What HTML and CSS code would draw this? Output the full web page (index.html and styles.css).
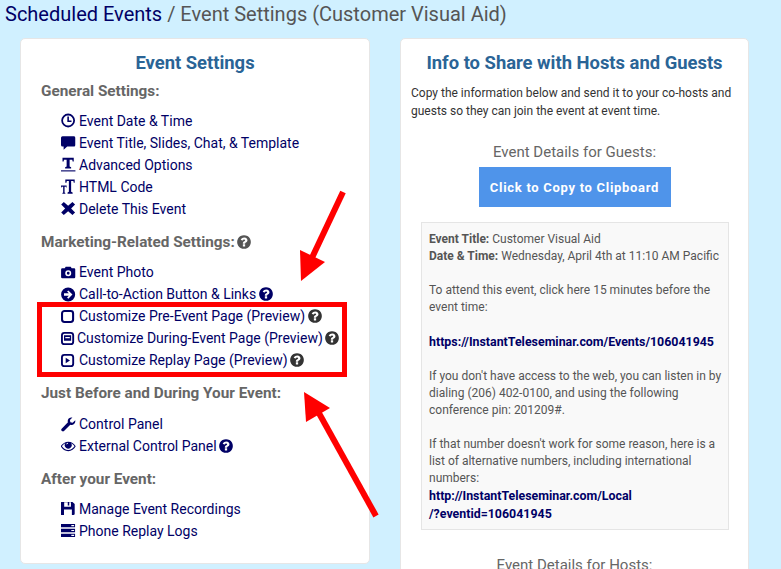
FILE: index.html
```html
<!DOCTYPE html>
<html lang="en">
<head>
<meta charset="utf-8">
<title>Event Settings</title>
<link rel="stylesheet" href="styles.css">
</head>
<body>
<svg class="sprite" aria-hidden="true">
  <symbol id="i-help" viewBox="0 0 1792 1792"><path d="M1024 1376v-192q0-14-9-23t-23-9h-192q-14 0-23 9t-9 23v192q0 14 9 23t23 9h192q14 0 23-9t9-23zm256-672q0-88-55.5-163t-138.5-116-170-41q-243 0-371 213-15 24 8 42l132 100q7 6 19 6 16 0 25-12 53-68 86-92 34-24 86-24 48 0 85.5 26t37.5 59q0 38-20 61t-68 45q-63 28-115.5 86.5t-52.5 125.5v36q0 14 9 23t23 9h192q14 0 23-9t9-23q0-19 21.5-49.5t54.5-49.5q32-18 49-28.5t46-35 44.5-48 28-60.5 12.5-81zm384 192q0 209-103 385.5t-279.5 279.5-385.5 103-385.5-103-279.5-279.5-103-385.5 103-385.5 279.5-279.5 385.5-103 385.5 103 279.5 279.5 103 385.5z"/></symbol>
  <symbol id="i-clock" viewBox="0 0 16 16"><circle cx="7.6" cy="8" r="6.4" fill="none" stroke="currentColor" stroke-width="1.9"/><path d="M7.6 3.8V8.8H11.2" fill="none" stroke="currentColor" stroke-width="1.7"/></symbol>
  <symbol id="i-comment" viewBox="0 0 16 16"><path d="M1.6 1.2H14Q15.2 1.2 15.2 2.8V10.6Q15.2 12.2 14 12.2H6.6L2.8 15.6V12.2H1.6Q0 12.2 0 10.6V2.8Q0 1.2 1.6 1.2Z"/></symbol>
  <symbol id="i-textw" viewBox="0 0 16 16"><path d="M1.6 .8H13.6V4.8H12.4L12 2.8H9.2V10.2L10.8 11V12.2H4.4V11L6 10.2V2.8H3.2L2.8 4.8H1.6Z"/><path d="M0 14.2H15.4V15.4H0Z"/></symbol>
  <symbol id="i-texth" viewBox="0 0 16 16"><path d="M4.6 .4H14.6V4H13.6L13.2 2.2H10.8V13.6L12.4 14.4V15.6H7V14.4L8.4 13.6V2.2H6.2L5.8 4H4.6Z"/><path d="M0 7H6V9H5.4V8.2H3.8V14.5L4.6 15V15.6H1.5V15L2.3 14.5V8.2H.6V9H0Z"/></symbol>
  <symbol id="i-times" viewBox="0 0 16 16"><path d="M3 1 7.6 5 12.2 1 15 3.8 10.8 8 15 12.2 12.2 15 7.6 11 3 15 .2 12.2 4.4 8 .2 3.8Z"/></symbol>
  <symbol id="i-camera" viewBox="0 0 16 16"><path fill-rule="evenodd" d="M5 1.8H10.4L11.4 3.5H14Q15.2 3.5 15.2 4.8V12.9Q15.2 14.2 14 14.2H1.4Q.1 14.2.1 12.9V4.8Q.1 3.5 1.4 3.5H4ZM7.7 5.6A3.2 3.2 0 1 0 7.7 12 3.2 3.2 0 0 0 7.7 5.6ZM7.7 7.3A1.5 1.5 0 1 1 7.7 10.3 1.5 1.5 0 0 1 7.7 7.3Z"/></symbol>
  <symbol id="i-arrow" viewBox="0 0 16 16"><path fill-rule="evenodd" d="M7.6 .5A7.5 7.5 0 1 1 7.6 15.5 7.5 7.5 0 0 1 7.6 .5ZM7.8 3.6 6.5 4.9 8.4 6.7H3.2V9.3H8.4L6.5 11.1 7.8 12.4 12.2 8Z"/></symbol>
  <symbol id="i-box" viewBox="0 0 16 16"><rect x="1.1" y="2.1" width="11.8" height="11.8" rx="2.6" fill="none" stroke="currentColor" stroke-width="2.2"/></symbol>
  <symbol id="i-boxm" viewBox="0 0 16 16"><rect x="1" y="2" width="12" height="12" rx="2.6" fill="none" stroke="currentColor" stroke-width="2"/><path fill-rule="evenodd" d="M3.2 4.4H10.8V10.4H3.2ZM4.6 6.4V7.6H9.4V6.4Z"/></symbol>
  <symbol id="i-boxp" viewBox="0 0 16 16"><rect x="1" y="2" width="12" height="12" rx="2.6" fill="none" stroke="currentColor" stroke-width="2"/><path d="M5 5 9.6 8 5 11Z"/></symbol>
  <symbol id="i-wrench" viewBox="0 0 16 16"><path d="M15.2 3.5Q15.6 6 13.9 7.5 12.1 9 9.9 8.2L3.2 15Q2.2 16 1 15-.4 13.8.7 12.6L7.4 5.7Q6.6 3.4 8.2 1.7 9.9.1 12.2.5L9.5 3.2 10 5.6 12.4 6.2Z"/></symbol>
  <symbol id="i-eye" viewBox="0 0 16 16"><path fill-rule="evenodd" d="M7.7 2.8C11.1 2.8 14 4.8 15.7 7.8 14 10.9 11.1 13 7.7 13S1.4 10.9-.3 7.8C1.4 4.8 4.3 2.8 7.7 2.8ZM4.7 4.5C3.2 5.1 2 6.3 1 7.8 2.7 10.3 5 11.8 7.7 11.8S12.7 10.3 14.4 7.8C13.4 6.3 12.2 5.1 10.7 4.5A3.7 3.7 0 1 1 4.7 4.5ZM7.5 4.1Q5.7 4.2 5.5 6.1 6.3 5 7.5 5Z"/></symbol>
  <symbol id="i-save" viewBox="0 0 16 16"><path fill-rule="evenodd" d="M.4 1H12.2L14.6 3.2V13.6Q14.6 15 13.2 15H.4Q0 15 0 14.6V1.4Q0 1 .4 1ZM3.4 1.4V6.2H10.6V1.4H8.8V4.8H7.2V1.4ZM3.2 9V15H11.6V9Z"/></symbol>
  <symbol id="i-server" viewBox="0 0 16 16"><path fill-rule="evenodd" d="M0 1H15V4.6H0ZM0 6.2H15V9.8H0ZM0 11.4H15V15H0ZM11 2.2V3.4H14V2.2ZM11 7.4V8.6H14V7.4ZM11 12.6V13.8H14V12.6Z"/></symbol>
</svg>

<header class="crumb"><a class="crumb-link">Scheduled Events</a> / Event Settings (Customer Visual Aid)</header>

<main class="columns">
  <section class="card">
    <h2 class="card-title">Event Settings</h2>

    <h3 class="group-head group-first">General Settings:</h3>
    <ul class="links">
      <li class="link"><svg class="ico ico-up"><use href="#i-clock"/></svg>Event Date &amp; Time</li>
      <li class="link"><svg class="ico ico-up"><use href="#i-comment"/></svg>Event Title, Slides, Chat, &amp; Template</li>
      <li class="link"><svg class="ico ico-up"><use href="#i-textw"/></svg>Advanced Options</li>
      <li class="link"><svg class="ico ico-up"><use href="#i-texth"/></svg>HTML Code</li>
      <li class="link"><svg class="ico ico-up"><use href="#i-times"/></svg>Delete This Event</li>
    </ul>

    <h3 class="group-head">Marketing-Related Settings: <svg class="help help-head"><use href="#i-help"/></svg></h3>
    <ul class="links">
      <li class="link"><svg class="ico"><use href="#i-camera"/></svg>Event Photo</li>
      <li class="link"><svg class="ico"><use href="#i-arrow"/></svg>Call-to-Action Button &amp; Links <svg class="help help-navy"><use href="#i-help"/></svg></li>
      <li class="link"><svg class="ico"><use href="#i-box"/></svg>Customize Pre-Event Page (Preview) <svg class="help help-dark"><use href="#i-help"/></svg></li>
      <li class="link link-tight"><svg class="ico"><use href="#i-boxm"/></svg>Customize During-Event Page (Preview) <svg class="help help-dark"><use href="#i-help"/></svg></li>
      <li class="link"><svg class="ico"><use href="#i-boxp"/></svg>Customize Replay Page (Preview) <svg class="help help-dark"><use href="#i-help"/></svg></li>
    </ul>

    <h3 class="group-head group-wide">Just Before and During Your Event:</h3>
    <ul class="links">
      <li class="link"><svg class="ico"><use href="#i-wrench"/></svg>Control Panel</li>
      <li class="link"><svg class="ico"><use href="#i-eye"/></svg>External Control Panel <svg class="help help-navy"><use href="#i-help"/></svg></li>
    </ul>

    <h3 class="group-head">After your Event:</h3>
    <ul class="links">
      <li class="link"><svg class="ico ico-up"><use href="#i-save"/></svg>Manage Event Recordings</li>
      <li class="link"><svg class="ico ico-up"><use href="#i-server"/></svg>Phone Replay Logs</li>
    </ul>
  </section>

  <section class="card card-info">
    <h2 class="card-title">Info to Share with Hosts and Guests</h2>
    <p class="intro">Copy the information below and send it to your co-hosts and guests so they can join the event at event time.</p>
    <h4 class="detail-head">Event Details for Guests:</h4>
    <div class="btn-row"><button class="copy-btn" type="button">Click to Copy to Clipboard</button></div>
    <div class="details">
      <p class="para"><b>Event Title:</b> Customer Visual Aid<br><b>Date &amp; Time:</b> Wednesday, April 4th at 11:10 AM Pacific</p>
      <p class="para">To attend this event, click here 15 minutes before the event time:</p>
      <p class="para"><a class="url">https://InstantTeleseminar.com/Events/106041945</a></p>
      <p class="para">If you don't have access to the web, you can listen in by dialing (206) 402-0100, and using the following conference pin: 201209#.</p>
      <p class="para">If that number doesn't work for some reason, here is a list of alternative numbers, including international numbers:<br><a class="url">http://InstantTeleseminar.com/Local<br>/?eventid=106041945</a></p>
    </div>
    <h4 class="detail-head detail-hosts">Event Details for Hosts:</h4>
  </section>
</main>

<div class="highlight-box"></div>
<svg class="annotations" viewBox="0 0 781 569" aria-hidden="true">
  <path class="arrow-line" d="M343 192 310 262"/>
  <path class="arrow-head" d="M300 250 325 262 301 281Z"/>
  <path class="arrow-line" d="M376 516 315 406"/>
  <path class="arrow-head" d="M304 392 330 408 306 422Z"/>
</svg>
</body>
</html>
```

FILE: styles.css
```css
* { box-sizing: border-box; }
html, body { margin: 0; height: 100%; overflow: hidden; }
body {
  position: relative;
  background: #d0f0ff;
  font-family: Roboto, "Liberation Sans", sans-serif;
  color: #555;
}
.sprite { display: none; }

.crumb {
  padding: 3px 0 0 5px;
  height: 38px;
  font-size: 20px;
  line-height: 23px;
  color: #555;
}
.crumb-link { color: #000066; }

.columns {
  display: grid;
  grid-template-columns: 350px 349px;
  column-gap: 30px;
  padding-left: 20px;
  align-items: start;
}
.card {
  background: #fff;
  border: 1px solid #e6e6e6;
  border-radius: 5px;
  height: 526px;
  padding: 11px 20px 0;
}
.card-info { height: 560px; padding: 11px 10px 0; }
.card-title {
  margin: 0;
  text-align: center;
  font-size: 18.4px;
  line-height: 26px;
  font-weight: 700;
  color: #2a6496;
}
.group-head {
  margin: 11px 0 8px;
  font-size: 15.3px;
  line-height: 22px;
  font-weight: 700;
  color: #666;
}
.group-first { margin-top: 4px; }
.group-wide { margin-bottom: 9px; }
.links { list-style: none; margin: 0; padding: 0 0 0 20px; }
.link {
  display: flex;
  align-items: center;
  height: 22px;
  font-size: 14px;
  color: #000066;
  white-space: pre;
}
.ico {
  width: 15px;
  height: 15px;
  margin-right: 3px;
  fill: currentColor;
  flex: none;
}
.ico-up { margin-bottom: 2px; }
.link-tight .ico { margin-right: 1px; }
.help {
  width: 16px;
  height: 16px;
  margin-left: -2px;
  fill: #555;
  vertical-align: -3px;
  flex: none;
}
.help-head { margin-left: -3px; }
.help-navy { fill: #000066; }
.help-dark { fill: #333; }

.intro {
  margin: 8px 0 0;
  font-size: 12px;
  line-height: 18px;
  color: #333;
}
.detail-head {
  margin: 21px 0 0;
  text-align: center;
  font-size: 15px;
  line-height: 22px;
  font-weight: 400;
  color: #666;
}
.btn-row { display: flex; justify-content: center; margin-top: 4px; }
.copy-btn {
  width: 192px;
  height: 40px;
  border: 0;
  padding: 0;
  background: #4f94ea;
  color: #fff;
  font-family: Roboto, sans-serif;
  font-size: 13px;
  font-weight: 700;
  letter-spacing: .7px;
}
.details {
  margin: 15px 9px 0 10px;
  border: 1px solid #e5e5e5;
  background: #f9f9f9;
  padding: 8px 5px 6px 7px;
  font-size: 12px;
  line-height: 17px;
  color: #555;
}
.para { margin: 0 0 17px; }
.para:last-child { margin-bottom: 0; }
.url { font-size: 12.4px; font-weight: 700; color: #000066; }
.detail-hosts { margin-top: 24px; }

.highlight-box {
  position: absolute;
  left: 37px;
  top: 302px;
  width: 310px;
  height: 75px;
  border: 5px solid #f00;
}
.annotations {
  position: absolute;
  left: 0;
  top: 0;
  width: 781px;
  height: 569px;
  pointer-events: none;
}
.arrow-line { stroke: #f00; stroke-width: 6; fill: none; }
.arrow-head { fill: #f00; }
```
